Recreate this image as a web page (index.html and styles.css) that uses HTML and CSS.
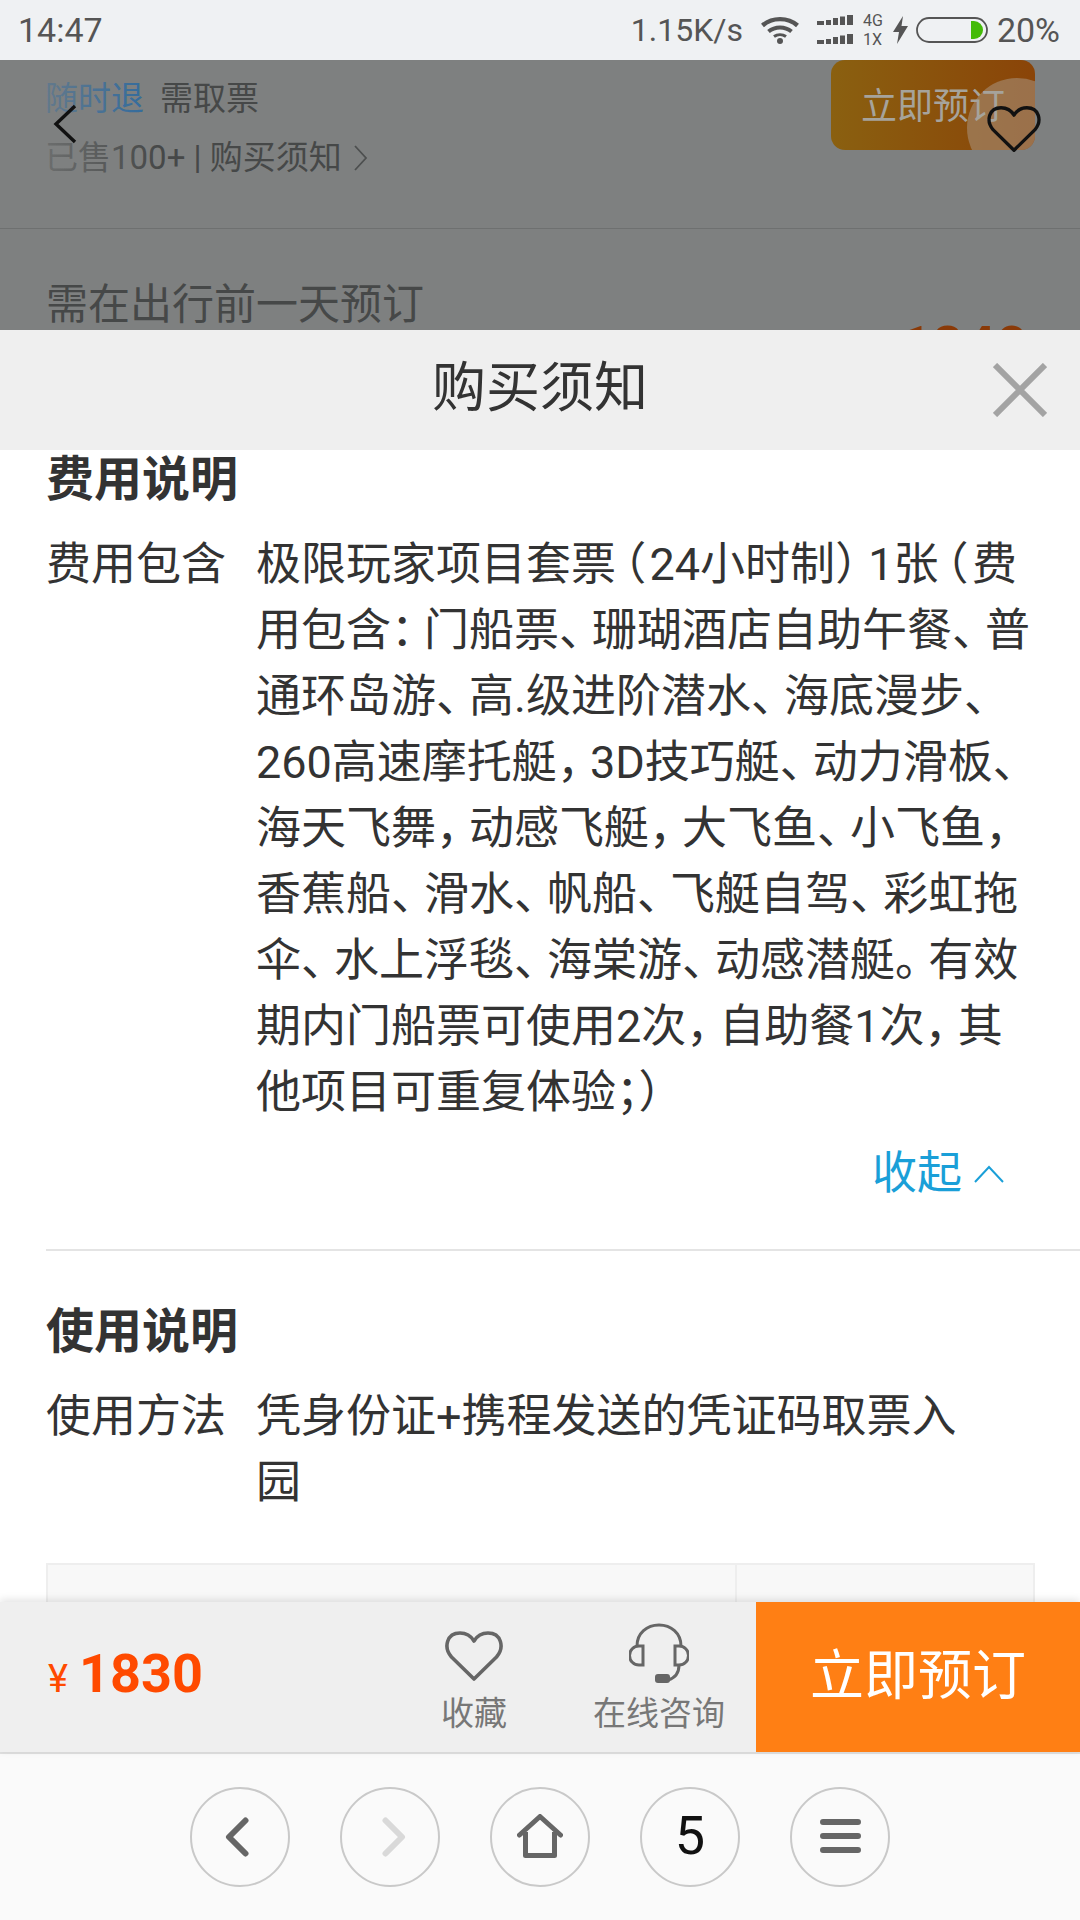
FILE: index.html
```html
<!DOCTYPE html>
<html lang="zh">
<head>
<meta charset="utf-8">
<title>购买须知</title>
<link rel="stylesheet" href="styles.css">
</head>
<body>
<div class="phone">
  <header class="status">
    <span class="time">14:47</span>
    <div class="status-right">
      <span class="speed">1.15K/s</span>
      <svg class="wifi" viewBox="0 0 38 28"><path d="M1.5 9.5C11 1 27 1 36.5 9.5" fill="none" stroke="#555" stroke-width="4.4"/><path d="M7.5 15.5C14 10 24 10 30.500 15.500" fill="none" stroke="#555" stroke-width="4"/><path d="M13 20.500C16.500 18 21.500 18 25 20.500" fill="none" stroke="#555" stroke-width="3"/><circle cx="19" cy="25" r="3" fill="#555"/></svg>
      <div class="signals">
        <div class="sig-row"><svg class="sig" viewBox="0 0 37 11"><path d="M0 6h7v4H0zM9 5h5v5H9zM16 3h5v7h-5zM23 1.500h5V10h-5zM30 0h6v10h-6z" fill="#555"/></svg><span>4G</span></div>
        <div class="sig-row"><svg class="sig" viewBox="0 0 37 11"><path d="M0 6h7v4H0zM9 5h5v5H9zM16 3h5v7h-5zM23 1.500h5V10h-5zM30 0h6v10h-6z" fill="#555"/></svg><span>1X</span></div>
      </div>
      <svg class="bolt" viewBox="0 0 17 28"><path d="M11 0 1 16h6L5 28l11-18H9.500z" fill="#555"/></svg>
      <svg class="battery" viewBox="0 0 72 26"><rect x="1" y="1" width="70" height="24" rx="12" fill="none" stroke="#555" stroke-width="1.8"/><path d="M55 4h3a9 9 0 0 1 0 18h-3z" fill="#44bb08"/></svg>
      <span class="pct">20%</span>
    </div>
  </header>

  <section class="backdrop">
    <div class="bd-row">
      <div class="bd-info">
        <div class="bd-tags"><span class="bd-link">随时退</span><span>需取票</span></div>
        <div class="bd-sold"><span>已售100+ | 购买须知</span><svg class="bd-more" viewBox="0 0 14 26"><path d="M1 1l11 12L1 25" fill="none" stroke="#4d4f4f" stroke-width="1.8"/></svg></div>
      </div>
      <div class="bd-btn"><span class="bd-ripple"></span><span class="bd-btn-text">立即预订</span></div>
    </div>
    <div class="bd-note"><span>需在出行前一天预订</span><span class="bd-price">1840</span></div>
    <div class="bd-fade"></div>
    <svg class="nav-back" viewBox="0 0 24 40"><path d="M22 2 3 20l19 18" fill="none" stroke="#111" stroke-width="3.400"/></svg>
    <svg class="nav-heart" viewBox="0 0 58 52"><path d="M29 49 6.500 27C-2 17 2 3 15 3c6 0 11 3 14 8 3-5 8-8 14-8 13 0 17 14 8.500 24z" fill="none" stroke="#111" stroke-width="3.600" stroke-linejoin="round"/></svg>
  </section>

  <section class="sheet-head">
    <h1>购买须知</h1>
    <svg class="close" viewBox="0 0 54 54"><path d="M2 2l50 50M52 2 2 52" stroke="#a3a3a3" stroke-width="6"/></svg>
  </section>

  <main class="content">
    <h2 class="sec-title first">费用说明</h2>
    <div class="item">
      <div class="item-label">费用包含</div>
      <div class="item-text">
        <div>极限玩家项目套票<span class="po">（</span>24小时制<span class="pc">）</span>1张<span class="po">（</span>费</div>
        <div>用包含<span class="pc">：</span>门船票<span class="pc">、</span>珊瑚酒店自助午餐<span class="pc">、</span>普</div>
        <div>通环岛游<span class="pc">、</span>高.级进阶潜水<span class="pc">、</span>海底漫步<span class="pc">、</span></div>
        <div>260高速摩托艇<span class="pc">，</span>3D技巧艇<span class="pc">、</span>动力滑板<span class="pc">、</span></div>
        <div>海天飞舞<span class="pc">，</span>动感飞艇<span class="pc">，</span>大飞鱼<span class="pc">、</span>小飞鱼<span class="pc">，</span></div>
        <div>香蕉船<span class="pc">、</span>滑水<span class="pc">、</span>帆船<span class="pc">、</span>飞艇自驾<span class="pc">、</span>彩虹拖</div>
        <div>伞<span class="pc">、</span>水上浮毯<span class="pc">、</span>海棠游<span class="pc">、</span>动感潜艇<span class="pc">。</span>有效</div>
        <div>期内门船票可使用2次<span class="pc">，</span>自助餐1次<span class="pc">，</span>其</div>
        <div>他项目可重复体验；<span class="pc">）</span></div>
      </div>
    </div>
    <div class="collapse"><span>收起</span><svg viewBox="0 0 30 18"><path d="M1 17 15 2l14 15" fill="none" stroke="#1a9fd8" stroke-width="2"/></svg></div>
    <hr class="divider">
    <h2 class="sec-title second">使用说明</h2>
    <div class="item">
      <div class="item-label">使用方法</div>
      <div class="item-text">
        <div>凭身份证+携程发送的凭证码取票入</div>
        <div>园</div>
      </div>
    </div>
    <div class="table"><div class="cell wide"></div><div class="cell"></div></div>
  </main>

  <section class="action-bar">
    <div class="price"><span class="yen">¥</span><span class="amount">1830</span></div>
    <div class="act fav">
      <svg viewBox="0 0 58 52"><path d="M29 49 6.500 27C-2 17 2 3 15 3c6 0 11 3 14 8 3-5 8-8 14-8 13 0 17 14 8.500 24z" fill="none" stroke="#666" stroke-width="3.600" stroke-linejoin="round"/></svg>
      <span>收藏</span>
    </div>
    <div class="act chat">
      <svg viewBox="0 0 60 60"><path d="M8 23C8 10 18 2 30 2s22 8 22 21" fill="none" stroke="#666" stroke-width="3"/><path d="M14 23h-4a9.500 9.500 0 0 0 0 19h4zM46 23h4a9.500 9.500 0 0 1 0 19h-4z" fill="none" stroke="#666" stroke-width="3"/><path d="M50 42c0 8-4 13-11 15" fill="none" stroke="#666" stroke-width="3"/><rect x="26" y="51" width="15" height="9" rx="3" fill="#666"/></svg>
      <span>在线咨询</span>
    </div>
    <div class="buy">立即预订</div>
  </section>

  <nav class="browser-bar">
    <div class="circle"><svg class="chev back" viewBox="0 0 24 40"><path d="M20.500 3.500 4 20l16.500 16.500" fill="none" stroke="#666" stroke-width="6" stroke-linecap="round" stroke-linejoin="round"/></svg></div>
    <div class="circle off"><svg class="chev fwd" viewBox="0 0 24 40"><path d="M3.500 3.500 20 20 3.500 36.500" fill="none" stroke="#d9d9d9" stroke-width="6" stroke-linecap="round" stroke-linejoin="round"/></svg></div>
    <div class="circle"><svg class="home" viewBox="0 0 46 44"><path d="M2.500 21 23 2.500 43.500 21" fill="none" stroke="#666" stroke-width="5" stroke-linecap="round" stroke-linejoin="round"/><path d="M8.500 18v23.500h29V18" fill="none" stroke="#666" stroke-width="5" stroke-linejoin="round"/></svg></div>
    <div class="circle tabs">5</div>
    <div class="circle"><svg class="menu" viewBox="0 0 41 34"><path d="M3 3h35M3 17h35M3 31h35" stroke="#666" stroke-width="6" stroke-linecap="round"/></svg></div>
  </nav>
</div>
</body>
</html>
```
FILE: styles.css
```css
* { box-sizing: border-box; }
html, body { margin: 0; padding: 0; }
body { font-family: Roboto, "Noto Sans CJK SC", sans-serif; background: #fff; }
.phone { width: 1080px; height: 1920px; display: flex; flex-direction: column; overflow: hidden; }

.status { height: 60px; flex: none; background: #eff1f3; color: #555; display: flex; align-items: center; justify-content: space-between; padding: 0 20px 0 18px; font-size: 34px; }
.status-right { display: flex; align-items: center; }
.speed { font-size: 32px; margin-right: 18px; }
.wifi { width: 38px; height: 28px; margin-right: 18px; }
.signals { display: flex; flex-direction: column; gap: 8px; margin-right: 9px; }
.sig-row { display: flex; align-items: center; gap: 9px; height: 11px; font-size: 16px; }
.sig { width: 37px; height: 11px; }
.bolt { width: 17px; height: 28px; margin-right: 7px; }
.battery { width: 72px; height: 26px; margin-right: 9px; }

.backdrop { height: 270px; flex: none; position: relative; overflow: hidden; background: #7e8080; color: #464848; }
.bd-row { height: 169px; border-bottom: 1px solid #6e7070; display: flex; justify-content: space-between; padding: 0 45px 0 45px; }
.bd-info { padding-top: 18px; font-size: 33px; line-height: 42px; }
.bd-tags { display: flex; gap: 16px; }
.bd-link { color: #2c6aa0; }
.bd-sold { margin-top: 17px; display: flex; align-items: center; gap: 12px; }
.bd-more { width: 14px; height: 26px; }
.bd-btn { position: relative; overflow: hidden; width: 204px; height: 90px; border-radius: 14px; background: linear-gradient(90deg, #8a6010, #8a4408); color: #a6a39c; font-size: 36px; display: flex; align-items: center; justify-content: center; padding-bottom: 4px; }
.bd-ripple { position: absolute; width: 100px; height: 100px; border-radius: 50%; left: 136px; top: 18px; background: rgba(170,150,130,.55); }
.bd-btn-text { position: relative; }
.bd-note { padding: 52px 52px 0 46px; font-size: 42px; line-height: 48px; display: flex; justify-content: space-between; }
.bd-price { color: #8a3a08; font-weight: 700; font-size: 56px; margin-top: 42px; }
.bd-fade { position: absolute; left: 40px; top: 0; width: 120px; height: 130px; background: linear-gradient(90deg, rgba(126,128,128,.7), rgba(126,128,128,0)); }
.nav-back { position: absolute; left: 53px; top: 44px; width: 24px; height: 40px; }
.nav-heart { position: absolute; left: 987px; top: 45px; width: 54px; height: 48px; }

.sheet-head { height: 120px; flex: none; background: #efefef; position: relative; display: flex; align-items: center; justify-content: center; padding-bottom: 14px; }
.sheet-head h1 { margin: 0; font-weight: 400; font-size: 54px; color: #333; }
.close { position: absolute; right: 33px; top: 33px; width: 54px; height: 54px; }

.content { flex: 1; min-height: 0; overflow: hidden; background: #fff; padding-left: 46px; color: #333; }
.sec-title { margin: 0; font-size: 48px; font-weight: 700; line-height: 60px; }
.second { margin-top: 51px; }
.item { display: flex; margin-top: 22px; font-size: 45px; line-height: 66px; }
.item-label { width: 210px; flex: none; }
.item-text { white-space: nowrap; }
.pc { letter-spacing: -12px; }
.po { font-feature-settings: "palt"; padding-left: 6px; padding-right: 5px; }
.collapse { display: flex; align-items: center; justify-content: flex-end; padding-right: 76px; margin-top: 15px; color: #1a9fd8; font-size: 45px; gap: 12px; line-height: 66px; }
.collapse svg { width: 30px; height: 18px; }
.divider { border: 0; height: 2px; background: #e4e4e4; margin: 42px 0 0; }
.table { margin: 47px 0 0; width: 989px; height: 200px; background: #f8f8f8; border: 2px solid #eee; display: flex; }
.cell.wide { width: 689px; border-right: 2px solid #eee; }

.action-bar { height: 150px; flex: none; background: #efefef; display: flex; align-items: stretch; position: relative; box-shadow: 0 -2px 8px rgba(0,0,0,.12); }
.price { width: 429px; padding: 40px 0 0 48px; display: flex; align-items: baseline; color: #ff4a00; }
.yen { font-size: 38px; margin-right: 11px; }
.amount { font-size: 54px; font-weight: 700; }
.act { display: flex; flex-direction: column; align-items: center; color: #777; font-size: 33px; line-height: 40px; white-space: nowrap; }
.fav { width: 90px; padding-top: 28px; }
.fav svg { width: 58px; height: 52px; margin-bottom: 12px; }
.chat { width: 190px; margin-left: 45px; padding-top: 21px; }
.chat svg { width: 60px; height: 60px; margin-bottom: 11px; }
.buy { margin-left: auto; width: 324px; background: #ff7f14; color: #fff; font-size: 54px; display: flex; align-items: center; justify-content: center; padding-bottom: 12px; }

.browser-bar { height: 168px; flex: none; background: #fafafa; border-top: 2px solid #e0e0e0; display: flex; justify-content: center; align-items: center; gap: 50px; }
.circle { width: 100px; height: 100px; border-radius: 50%; border: 2px solid #c9c9c9; display: flex; align-items: center; justify-content: center; }
.chev { width: 24px; height: 40px; }
.back { margin-right: 7px; }
.fwd { margin-left: 8px; }
.home { width: 46px; height: 44px; margin-bottom: 3px; }
.menu { width: 41px; height: 34px; margin-bottom: 3px; }
.tabs { font-size: 54px; color: #111; padding-bottom: 4px; }
```
